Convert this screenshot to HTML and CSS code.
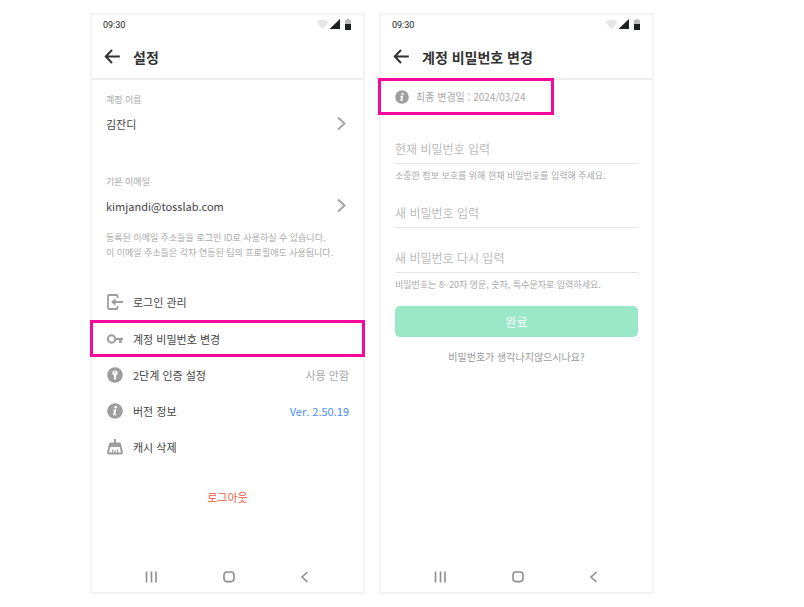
FILE: index.html
```html
<!DOCTYPE html>
<html lang="ko">

<head>
  <meta charset="UTF-8">
  <meta name="viewport" content="width=device-width, initial-scale=1">
  <title>계정 비밀번호 변경</title>
  <link rel="stylesheet" href="styles.css">
</head>

<body>

  <!-- 공통 아이콘 -->
  <svg class="symbols" aria-hidden="true">
    <symbol id="status" viewBox="0 0 36 12">
      <path d="M0.500 3Q6.500 -2 12.500 3L6.500 10.500Z" fill="#e6e6e6" />
      <path d="M24 0V10H13.500Z" fill="#202124" />
      <path d="M30.500 0h3v1h1.500v5h-6V1h1.500z" fill="#bdbdbd" />
      <path d="M29 5h6v6h-6z" fill="#202124" />
    </symbol>
    <symbol id="back" viewBox="0 0 16 16">
      <path d="M8 1L1.800 7.500 8 14M1.800 7.500h14" fill="none" stroke="#333" stroke-width="2" />
    </symbol>
    <symbol id="arrow" viewBox="0 0 16 16">
      <path d="M5 1.500l6.500 6L5 13.500" fill="none" stroke="#a6a6a6" stroke-width="2" />
    </symbol>
    <symbol id="info" viewBox="0 0 16 16">
      <circle cx="8" cy="8" r="7.800" fill="#9e9e9e" />
      <circle cx="8.800" cy="4.300" r="1.300" fill="#fff" />
      <path d="M6.300 6.500h3L8.300 11h1v1.200H6L7 7.700h-.9z" fill="#fff" />
    </symbol>
    <symbol id="recent" viewBox="0 0 14 14">
      <path d="M2.500 1.500v11M7.500 1.500v11M12 1.500v11" stroke="#8e8e8e" stroke-width="1.600" />
    </symbol>
    <symbol id="home" viewBox="0 0 14 14">
      <rect x="3" y="2" width="10" height="9.600" rx="3" fill="none" stroke="#8e8e8e" stroke-width="1.600" />
    </symbol>
    <symbol id="prev" viewBox="0 0 14 14">
      <path d="M10.500 2L5 7l5.500 5" fill="none" stroke="#8e8e8e" stroke-width="1.600" />
    </symbol>
  </svg>

  <main class="screens">

    <!-- 설정 -->
    <section class="phone">
      <div class="status">
        <span>09:30</span>
        <svg class="status-icons"><use href="#status" /></svg>
      </div>
      <header class="header">
        <button type="button" class="icon-btn" aria-label="뒤로"><svg class="icon"><use href="#back" /></svg></button>
        <h1 class="title">설정</h1>
      </header>

      <div class="content">
        <div class="account">
          <p class="label">계정 이름</p>
          <button type="button" class="value">김잔디 <svg class="icon"><use href="#arrow" /></svg></button>
        </div>
        <div class="account">
          <p class="label">기본 이메일</p>
          <button type="button" class="value">kimjandi@tosslab.com <svg class="icon"><use href="#arrow" /></svg></button>
        </div>
        <p class="desc">등록된 이메일 주소들을 로그인 ID로 사용하실 수 있습니다.<br>이 이메일 주소들은 각자 연동된 팀의 프로필에도 사용됩니다.</p>
      </div>

      <nav class="menu">
        <button type="button" class="menu-item">
          <svg class="menu-icon" viewBox="0 0 18 18">
            <path d="M11.500 5V3q0-1-1-1H3q-1 0-1 1v12q0 1 1 1h7.500q1 0 1-1v-2" fill="none" stroke="#9e9e9e" stroke-width="1.800" />
            <path d="M17 9H8" fill="none" stroke="#9e9e9e" stroke-width="2" />
            <path d="M9.500 5.300v7.400L5 9z" fill="#9e9e9e" />
          </svg>
          로그인 관리
        </button>
        <button type="button" class="menu-item highlight">
          <svg class="menu-icon" viewBox="0 0 18 18">
            <circle cx="5.500" cy="9" r="3.700" fill="none" stroke="#9e9e9e" stroke-width="2" />
            <path d="M9 8h8v2h-1.200v3h-2.800v-3H9z" fill="#9e9e9e" />
          </svg>
          계정 비밀번호 변경
        </button>
        <button type="button" class="menu-item">
          <svg class="menu-icon" viewBox="0 0 18 18">
            <circle cx="9" cy="9" r="7.800" fill="#9e9e9e" />
            <circle cx="9" cy="7" r="2.600" fill="#fff" />
            <path d="M8 8h2v5.500H8z" fill="#fff" />
            <circle cx="9" cy="6.800" r="0.800" fill="#9e9e9e" />
          </svg>
          2단계 인증 설정
          <span class="state">사용 안함</span>
        </button>
        <button type="button" class="menu-item">
          <svg class="menu-icon" viewBox="-1 -1 18 18"><use href="#info" width="16" height="16" /></svg>
          버전 정보
          <span class="state version">Ver. 2.50.19</span>
        </button>
        <button type="button" class="menu-item">
          <svg class="menu-icon" viewBox="0 0 18 18">
            <path d="M8 1h2v3.500h3.500q1.500 0 1.500 1.500v2H3V6q0-1.500 1.500-1.500H8z" fill="#9e9e9e" />
            <path d="M3.500 8L2 14.500q0 1 1 1h12q1 0 1-1L14.500 8z" fill="#fff" stroke="#9e9e9e" stroke-width="2" />
            <path d="M6.500 15v-3.500M9 15v-2.500M11.500 15v-3.500" stroke="#9e9e9e" stroke-width="1.300" />
          </svg>
          캐시 삭제
        </button>
      </nav>
      <button type="button" class="logout">로그아웃</button>

      <div class="navbar">
        <svg><use href="#recent" /></svg>
        <svg><use href="#home" /></svg>
        <svg><use href="#prev" /></svg>
      </div>
    </section>

    <!-- 계정 비밀번호 변경 -->
    <section class="phone">
      <div class="status">
        <span>09:30</span>
        <svg class="status-icons"><use href="#status" /></svg>
      </div>
      <header class="header">
        <button type="button" class="icon-btn" aria-label="뒤로"><svg class="icon"><use href="#back" /></svg></button>
        <h2 class="title">계정 비밀번호 변경</h2>
      </header>

      <p class="notice highlight">
        <svg><use href="#info" /></svg>
        최종 변경일 : 2024/03/24
      </p>

      <form class="form">
        <div class="field">
          <input type="password" placeholder="현재 비밀번호 입력" aria-label="현재 비밀번호 입력">
          <p class="help">소중한 정보 보호를 위해 현재 비밀번호를 입력해 주세요.</p>
        </div>
        <div class="field">
          <input type="password" placeholder="새 비밀번호 입력" aria-label="새 비밀번호 입력">
        </div>
        <div class="field">
          <input type="password" placeholder="새 비밀번호 다시 입력" aria-label="새 비밀번호 다시 입력">
          <p class="help">비밀번호는 8~20자 영문, 숫자, 특수문자로 입력하세요.</p>
        </div>
        <button type="submit" class="submit">완료</button>
        <a href="#" class="forgot">비밀번호가 생각나지않으시나요?</a>
      </form>

      <div class="navbar">
        <svg><use href="#recent" /></svg>
        <svg><use href="#home" /></svg>
        <svg><use href="#prev" /></svg>
      </div>
    </section>

  </main>

</body>

</html>
```
FILE: styles.css
```css
* {
  box-sizing: border-box;
}

body {
  margin: 0;
  background: #fff;
  color: #444;
  font-family: "Noto Sans CJK KR", sans-serif;
  font-size: 11px;
}

h1, h2, p {
  margin: 0;
}

button, input {
  padding: 0;
  border: 0;
  background: none;
  color: inherit;
  font: inherit;
}

button {
  cursor: pointer;
}

.symbols {
  display: none;
}

.screens {
  display: flex;
  gap: 14px;
  min-height: 100vh;
  padding: 13px 150px 13px 90px;
}

.phone {
  flex: 1;
  min-width: 0;
  display: flex;
  flex-direction: column;
  border: 2px solid #f3f3f3;
}

/* 상단 */
.status {
  display: flex;
  align-items: center;
  justify-content: space-between;
  height: 20px;
  padding: 0 11px;
  font-family: Roboto, sans-serif;
  font-size: 9px;
  color: #222;
}

.status-icons {
  width: 36px;
  height: 12px;
}

.header {
  display: flex;
  align-items: center;
  gap: 13px;
  height: 45px;
  padding: 0 12px;
  border-bottom: 2px solid #eee;
}

.icon-btn {
  display: flex;
}

.icon {
  width: 16px;
  height: 16px;
}

.title {
  font-size: 14px;
  font-weight: bold;
  line-height: 20px;
  color: #333;
}

/* 설정 */
.content {
  padding: 12px 14px 24px;
}

.account + .account {
  margin-top: 38px;
}

.label,
.desc,
.help {
  font-size: 9px;
  line-height: 15px;
  color: #a8a8a8;
}

.value {
  display: flex;
  align-items: center;
  justify-content: space-between;
  width: 100%;
  height: 24px;
  margin-top: 5px;
}

.desc {
  margin-top: 12px;
}

.menu {
  display: flex;
  flex-direction: column;
}

.menu-item {
  display: flex;
  align-items: center;
  gap: 9px;
  height: 36px;
  padding: 0 14px;
}

.menu-icon {
  width: 18px;
  height: 18px;
}

.highlight {
  border: 3px solid #f7079b;
}

.menu-item.highlight {
  height: 37px;
  margin: 0 -2px;
  padding: 0 13px;
}

.state {
  margin-left: auto;
  color: #a8a8a8;
}

.version {
  color: #4a90f5;
}

.logout {
  align-self: center;
  height: 24px;
  margin-top: 20px;
  color: #f0583a;
}

/* 비밀번호 변경 */
.notice {
  display: flex;
  align-items: center;
  align-self: flex-start;
  gap: 7px;
  height: 37px;
  margin: -2px 0 0 -3px;
  padding: 0 26px 0 14px;
  font-size: 10px;
  color: #a8a8a8;
}

.notice svg {
  width: 14px;
  height: 14px;
}

.form {
  display: flex;
  flex-direction: column;
  padding: 20px 14px;
}

.field {
  margin-bottom: 16px;
}

.field input {
  display: block;
  width: 100%;
  height: 29px;
  padding-bottom: 2px;
  border-bottom: 1px solid #e6e6e6;
  outline: none;
  font-size: 12px;
}

.field input::placeholder {
  color: #bcbcbc;
}

.help {
  margin-top: 4px;
}

.submit {
  height: 31px;
  margin-top: -2px;
  padding-bottom: 1px;
  border-radius: 5px;
  background: #9ae8c8;
  color: #fff;
  font-size: 12px;
}

.forgot {
  align-self: center;
  margin-top: 12px;
  font-size: 10px;
  line-height: 16px;
  color: #999;
  text-decoration: none;
}

/* 하단 */
.navbar {
  display: flex;
  align-items: center;
  justify-content: space-between;
  height: 30px;
  margin-top: auto;
  padding: 0 52px;
}

.navbar svg {
  width: 14px;
  height: 14px;
}
```
